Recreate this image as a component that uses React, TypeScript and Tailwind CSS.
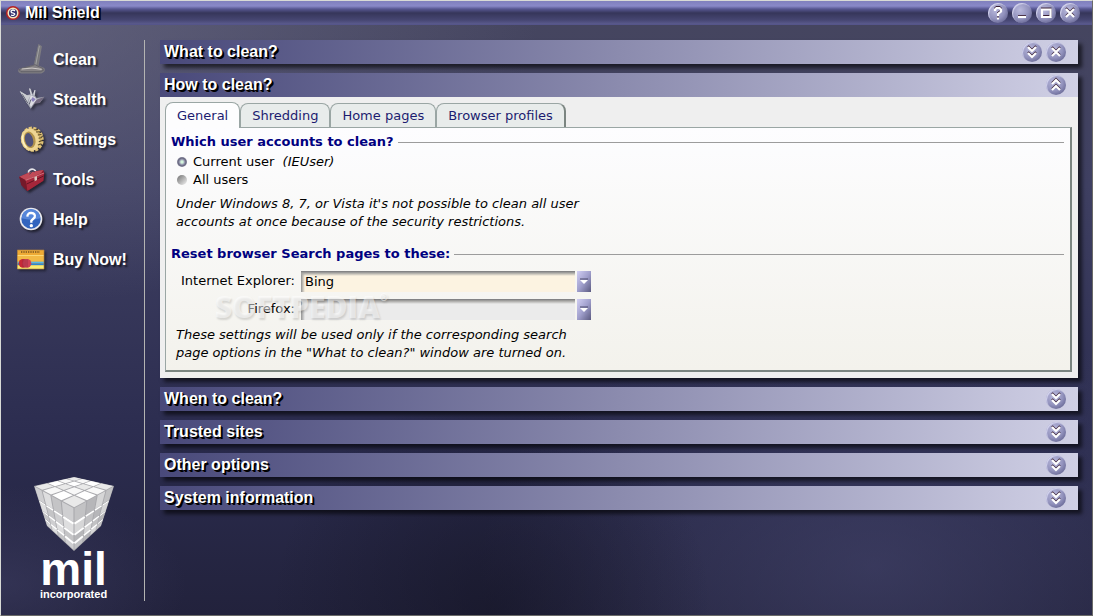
import React, { useState } from "react";

type Glyph = "help" | "minimize" | "maximize" | "close" | "down" | "up";

const GLYPHS: Record<Glyph, React.ReactNode> = {
  help: <path d="M7 8V6.5L8.5 5h3L13 6.5V8.5L10 11v2M10 14.5v2" />,
  minimize: <path d="M6 14h8" />,
  maximize: <path d="M6 6.5h8.5v7.5H6z" />,
  close: <path d="M6 6l8 8M14 6l-8 8" />,
  down: <path d="M6 5l4 4 4-4M6 11l4 4 4-4" />,
  up: <path d="M6 9l4-4 4 4M6 15l4-4 4 4" />,
};

const RoundButton = ({ glyph, label }: { glyph: Glyph; label: string }) => {
  return (
    <button
      aria-label={label}
      className="size-5 shrink-0 rounded-full bg-[radial-gradient(circle_at_40%_35%,#b9b9dc_0%,#9292bd_50%,#62628f_85%,#4b4b72_100%)] shadow-[inset_1px_1px_1px_#d5d5ee]"
    >
      <svg viewBox="0 0 20 20" className="size-5" fill="none">
        <g stroke="#3a2036" strokeWidth="2" transform="translate(0 -1)">
          {GLYPHS[glyph]}
        </g>
        <g stroke="#fff" strokeWidth="2.2">
          {GLYPHS[glyph]}
        </g>
      </svg>
    </button>
  );
};

const CleanIcon = () => (
  <svg viewBox="0 0 84 96" className="h-8 w-7 shrink-0">
    <path d="M66 4L53 64Q32 70 8 76Q2 84 14 86H72Q84 82 80 74L62 66L72 8Z" fill="#c9c38a" opacity=".28" stroke="#d8d29a" strokeWidth="5" />
    <path d="M63 6L51 60L56 68L62 62L70 8Z" fill="#77777b" />
    <path d="M67 6L56 64" stroke="#b9b9ba" strokeWidth="2" />
    <path d="M46 65Q54 58 62 66L77 73L79 79L70 83H12L6 77L14 73Z" fill="#858285" stroke="#56545d" strokeWidth="2" />
    <path d="M14 75Q46 69 74 76" stroke="#d0cbc8" strokeWidth="3" fill="none" />
  </svg>
);

const StealthIcon = () => (
  <svg viewBox="0 0 84 96" className="h-8 w-7 shrink-0 drop-shadow-[2px_2px_1px_#0006]">
    <path d="M8 21L30 34L40 31L36 13L41 14L47 31L53 18L56 18L53 34L59 42L82 38L68 57L54 58L41 74L31 59Z" fill="#a5a8b3" />
    <path d="M8 21L30 34L41 34L33 48L31 59Z" fill="#c9cbd0" />
    <path d="M41 34L53 39L59 47L42 70L35 55Z" fill="#dcdce2" />
    <path d="M42 70L59 47L82 38L68 57L54 58Z" fill="#73697f" />
    <path d="M47 39L56 46L48 54L42 47Z" fill="#8c83bc" />
    <path d="M16 31L32 57M41 47L37 61" stroke="#5e6071" strokeWidth="3" />
    <path d="M38 14L44 34M53 19L51 34" stroke="#d7d8de" strokeWidth="3" />
  </svg>
);

const SettingsIcon = () => (
  <svg viewBox="0 0 84 96" className="h-8 w-7 shrink-0 drop-shadow-[2px_2px_1px_#0008]">
    <g transform="rotate(-14 44 46)">
      <ellipse cx="46" cy="46" rx="29" ry="33" fill="#c6a45a" stroke="#e0c377" strokeWidth="10" strokeDasharray="9 4" />
      <ellipse cx="40" cy="46" rx="28" ry="34" fill="#eed592" />
      <ellipse cx="38" cy="46" rx="17" ry="25" fill="#b2934c" />
      <ellipse cx="36" cy="46" rx="12" ry="21" fill="#505177" />
      <path d="M22 26Q12 46 23 66" fill="none" stroke="#fff3c4" strokeWidth="4" />
      <path d="M57 20l13 2M62 28l12 2M65 38l11 1M65 48h11M63 58l11-1M58 67l11-1" stroke="#594a27" strokeWidth="3" />
    </g>
  </svg>
);

const ToolsIcon = () => (
  <svg viewBox="0 0 84 96" className="h-8 w-7 shrink-0 drop-shadow-[2px_2px_1px_#0008]">
    <path d="M35 29V21Q45 10 55 20V30" fill="none" stroke="#e5e5e9" strokeWidth="5" />
    <path d="M7 38L38 25L79 18L82 28L79 50L31 81L13 63Z" fill="#8f182a" />
    <path d="M7 38L38 25L79 18L72 28L26 49Z" fill="#c04a57" />
    <path d="M26 49L81 27L79 50L31 81Z" fill="#a5263a" />
    <path d="M7 38L26 49L31 81L13 63Z" fill="#74192a" />
    <path d="M26 49L81 27" stroke="#e5a0a4" strokeWidth="2" />
    <path d="M29 60L80 36" stroke="#611424" strokeWidth="3" />
    <path d="M52 40l8-4v12l-7 4z" fill="#d9c5bd" />
    <path d="M38 31q8-14 16-7" fill="none" stroke="#454458" strokeWidth="3" />
  </svg>
);

const HelpIcon = () => (
  <svg viewBox="0 0 84 96" className="h-8 w-7 shrink-0 drop-shadow-[2px_2px_1px_#0008]">
    <circle cx="42" cy="45" r="34" fill="#e8e8ed" />
    <circle cx="42" cy="45" r="29" fill="#3264be" />
    <path d="M14 43a28 28 0 0 1 56 0Q43 51 14 43Z" fill="#5686da" />
    <path d="M31 38Q32 26 43 27Q56 28 53 40L43 50V56" fill="none" stroke="#fff" strokeWidth="7" />
    <circle cx="43" cy="65" r="5" fill="#fff" />
  </svg>
);

const BuyIcon = () => (
  <svg viewBox="0 0 84 96" className="h-8 w-7 shrink-0 drop-shadow-[2px_2px_1px_#0006]">
    <path d="M1 18h80v57H1z" fill="#eeaa35" />
    <path d="M1 36h80v17H1z" fill="#f2b945" />
    <path d="M1 33h80v3H1z" fill="#fbd978" />
    <path d="M1 53h80v5H1z" fill="#58b8e6" />
    <path d="M1 58h80v6H1z" fill="#2f86d0" />
    <path d="M1 64h80v11H1z" fill="#f8ec72" />
    <path d="M12 24h57" stroke="#765320" strokeWidth="5" strokeDasharray="4 3" />
    <circle cx="18" cy="58" r="13" fill="#c72837" />
    <circle cx="30" cy="58" r="13" fill="#cf4055" />
    <path d="M18 46v24M24 45v26M30 46v24" stroke="#8c2a3f" strokeWidth="2" />
    <path d="M1 18h80v57H1z" fill="none" stroke="#b08040" strokeWidth="2" />
  </svg>
);

const NAV = [
  { label: "Clean", Icon: CleanIcon },
  { label: "Stealth", Icon: StealthIcon },
  { label: "Settings", Icon: SettingsIcon },
  { label: "Tools", Icon: ToolsIcon },
  { label: "Help", Icon: HelpIcon },
  { label: "Buy Now!", Icon: BuyIcon },
];

type Point = [number, number];

const CUTS = [0, 0.2, 0.42, 0.68, 1];
const LEVELS = [0, 0.36, 0.62, 0.82, 1];

// bilinear point inside the quad a-b-c-d
const at = ([a, b, c, d]: Point[], u: number, v: number): Point => [
  (1 - v) * ((1 - u) * a[0] + u * b[0]) + v * ((1 - u) * d[0] + u * c[0]),
  (1 - v) * ((1 - u) * a[1] + u * b[1]) + v * ((1 - u) * d[1] + u * c[1]),
];

const Face = ({ quad, rows, fills, lip }: { quad: Point[]; rows: number[]; fills: string[]; lip?: boolean }) => (
  <g>
    {[0, 1, 2, 3].flatMap((i) =>
      [0, 1, 2, 3].map((j) => {
        const u0 = CUTS[i] + 0.015;
        const u1 = CUTS[i + 1] - 0.015;
        const v0 = rows[j] + 0.01;
        const v1 = rows[j + 1] - 0.02;
        const corners = [at(quad, u0, v0), at(quad, u1, v0), at(quad, u1, v1), at(quad, u0, v1)];
        return (
          <g key={`${i}-${j}`}>
            <polygon points={corners.join(" ")} fill={fills[(i + j) % fills.length]} />
            {lip && j > 0 && <polyline points={corners.slice(0, 2).join(" ")} stroke="#fff" strokeWidth={1 + i / 3} />}
          </g>
        );
      })
    )}
  </g>
);

const CubeLogo = () => (
  <svg viewBox="0 0 80 74" className="h-[74px] w-20">
    <path d="M40 0L80 9L67 49L40 74L13 49L0 9Z" fill="#a9a9ad" />
    <Face quad={[[40, 0], [80, 9], [40, 31], [0, 9]]} rows={CUTS} fills={["#e9e9e9", "#f8f8f8", "#fff"]} />
    <Face lip quad={[[0, 9], [40, 31], [40, 74], [13, 49]]} rows={LEVELS} fills={["#cfcfd1", "#dededf", "#c4c4c6"]} />
    <Face lip quad={[[80, 9], [40, 31], [40, 74], [67, 49]]} rows={LEVELS} fills={["#c2c2c4", "#d6d6d7", "#b6b6b9"]} />
  </svg>
);

const Sidebar = () => (
  <aside className="flex w-36 shrink-0 flex-col border-r border-[#b4b4b2] pl-4">
    <nav>
      {NAV.map(({ label, Icon }) => (
        <a
          key={label}
          href="#"
          className="flex h-10 items-center gap-2 text-base font-bold text-white [text-shadow:2px_2px_2px_#000a]"
        >
          <Icon />
          {label}
        </a>
      ))}
    </nav>
    <div className="mt-auto flex flex-col items-center pr-3.5 font-bold text-white">
      <CubeLogo />
      <span className="h-9 text-[46px] leading-9">mil</span>
      <span className="text-[11px] leading-3.5">incorporated</span>
    </div>
  </aside>
);

const Bar = ({ title, open, closable }: { title: string; open?: boolean; closable?: boolean }) => (
  <header className="flex h-6 items-center gap-1 bg-linear-to-r from-[#49497a] via-[#8b8bae] to-[#d0d0e5] pr-3 pl-1">
    <h2 className="mr-auto text-base leading-6 font-bold text-white [text-shadow:1px_1px_0_#000,2px_2px_0_#000]">{title}</h2>
    <RoundButton glyph={open ? "up" : "down"} label={open ? `Collapse ${title}` : `Expand ${title}`} />
    {closable && <RoundButton glyph="close" label={`Close ${title}`} />}
  </header>
);

const Section = ({ children }: { children: React.ReactNode }) => (
  <section className="shadow-[4px_4px_4px_#0009]">{children}</section>
);

const GroupTitle = ({ children }: { children: React.ReactNode }) => (
  <h3 className="flex items-center gap-1 leading-[18px] font-bold text-[#000080]">
    {children}
    <span className="h-px flex-1 bg-[#9c9c9c]" />
  </h3>
);

const Radio = ({ id, checked, children }: { id: string; checked?: boolean; children: React.ReactNode }) => (
  <div className="flex h-[18px] items-center gap-1.5 pl-1.5">
    <input
      id={id}
      type="radio"
      name="accounts"
      defaultChecked={checked}
      className="size-2.5 appearance-none rounded-full bg-[linear-gradient(135deg,#707070,#f4f4f4)] checked:bg-[radial-gradient(circle,#d4f4dc_0_15%,#8d8da8_40%,#68687f_55%,#c8c8dc_100%)]"
    />
    <label htmlFor={id}>{children}</label>
  </div>
);

const Picker = ({ id, label, options, muted }: { id: string; label: string; options: string[]; muted?: boolean }) => (
  <>
    <label htmlFor={id} className="text-right leading-5">
      {label}
    </label>
    <div className="relative h-[21px]">
      <select
        id={id}
        className={`h-full w-full appearance-none border-r-[16px] border-transparent bg-clip-padding pl-1 outline-none ${
          muted ? "bg-[#ebebeb]" : "bg-[#fcf3e1]"
        } bg-[linear-gradient(#77777a,#a8a7a4_2px,transparent_5px),linear-gradient(90deg,#929292,transparent_4px)]`}
      >
        {options.map((option) => (
          <option key={option}>{option}</option>
        ))}
      </select>
      <svg viewBox="0 0 14 21" className="pointer-events-none absolute top-0 right-0 h-full w-3.5">
        <defs>
          <linearGradient id={`${id}-arrow`} x1="0" y1="0" x2="1" y2="1">
            <stop offset="0" stopColor="#d2cff4" />
            <stop offset=".5" stopColor="#a09fcc" />
            <stop offset="1" stopColor="#5b5a80" />
          </linearGradient>
        </defs>
        <path d="M0 0h14v21H0z" fill={`url(#${id}-arrow)`} />
        <path d="M3 8h8" stroke="#4a486b" />
        <path d="M3 9h8l-4 4z" fill="#fff" />
      </svg>
    </div>
  </>
);

const TABS = ["General", "Shredding", "Home pages", "Browser profiles"];

const Tabs = () => {
  const [active, setActive] = useState("General");

  return (
    <div role="tablist" className="flex h-[26px] items-end">
      {TABS.map((tab) => (
        <button
          key={tab}
          role="tab"
          aria-selected={tab === active}
          onClick={() => setActive(tab)}
          className={
            tab === active
              ? "relative z-10 -mb-px h-[26px] rounded-t-lg border border-b-0 border-[#9aa6a4] bg-[#fdfdfe] px-[11px] text-[#1c1c70]"
              : "h-6 rounded-t-lg border border-b-0 border-[#9aa6a4] bg-[#e8eceb] px-[11px] text-[#1c1c70] last:border-r-2 last:border-r-[#7b8581]"
          }
        >
          {tab}
        </button>
      ))}
    </div>
  );
};

const HowToClean = () => (
  <div className="bg-[#efefef] px-[5px] pt-1 pr-1.5 pb-1.5 font-['DejaVu_Sans',sans-serif] text-[13px] text-black">
    <Tabs />
    <div className="border border-r-2 border-b-2 border-[#9aa6a4] border-r-[#7b8581] border-b-[#7b8581] bg-linear-to-b from-[#fdfdff] to-[#f3f2ec] pt-[5px] pr-1.5 pb-2 pl-[5px]">
      <GroupTitle>Which user accounts to clean?</GroupTitle>
      <div className="pt-0.5">
        <Radio id="current-user" checked>
          Current user&nbsp; <i>(IEUser)</i>
        </Radio>
        <Radio id="all-users">All users</Radio>
      </div>
      <p className="pt-1.5 pb-3.5 pl-[5px] leading-[18px] italic">
        Under Windows 8, 7, or Vista it's not possible to clean all user
        <br />
        accounts at once because of the security restrictions.
      </p>
      <GroupTitle>Reset browser Search pages to these:</GroupTitle>
      <div className="relative pt-2 pl-[5px]">
        <div className="grid grid-cols-[119px_290px] gap-x-1.5 gap-y-[7px]">
          <Picker id="ie" label="Internet Explorer:" options={["Bing", "Google"]} />
          <Picker id="firefox" label="Firefox:" options={["", "Google"]} muted />
        </div>
        <span className="pointer-events-none absolute top-6 left-11 flex font-['Open_Sans',sans-serif] text-[30px] leading-10 font-extrabold text-white/50 [text-shadow:1px_2px_2px_#0002]">
          SOFTPEDIA
          <span className="text-[10px] leading-5">®</span>
        </span>
      </div>
      <p className="pt-1.5 pl-[5px] leading-[18px] italic">
        These settings will be used only if the corresponding search
        <br />
        page options in the "What to clean?" window are turned on.
      </p>
    </div>
  </div>
);

const TitleBar = () => (
  <header className="flex h-6 items-center gap-1 border-b border-[#55558a] bg-[linear-gradient(#8080bd,#8989c8_5px,#565690_8px,#36365a_12px,#464672_19px,#5a5a8c)] pr-3 pl-1">
    <svg viewBox="0 0 16 16" className="size-4">
      <circle cx="8" cy="8" r="7" fill="#b72222" />
      <circle cx="8" cy="8" r="5.5" fill="#f3e9c0" />
      <circle cx="8" cy="8" r="4" fill="#30306c" />
      <path d="M10 6Q8 4 6 6Q6 8 8 8Q11 9 9 10Q8 11 6 10" fill="none" stroke="#fff" strokeWidth="1.2" />
    </svg>
    <h1 className="mr-auto text-base leading-6 font-bold text-white [text-shadow:1px_1px_0_#000,2px_2px_0_#000]">Mil Shield</h1>
    <RoundButton glyph="help" label="Help" />
    <RoundButton glyph="minimize" label="Minimize" />
    <RoundButton glyph="maximize" label="Maximize" />
    <RoundButton glyph="close" label="Close" />
  </header>
);

export default function App() {
  return (
    <div className="flex min-h-screen flex-col border border-t-[#d8dad6] border-r-[#6a6a68] border-b-[#6a6a68] border-l-[#d8dad6] bg-[radial-gradient(ellipse_at_0%_0%,#74749099_0%,transparent_35%),radial-gradient(ellipse_at_0%_95%,#40406688_0%,transparent_12%),radial-gradient(ellipse_at_45%_100%,#14142499_0%,transparent_26%),radial-gradient(ellipse_at_80%_92%,#4a4b7488_0%,transparent_32%),linear-gradient(#46465f_0%,#3f4062_30%,#2c2d50_70%,#22223c_100%)] font-['Liberation_Sans',Arial,sans-serif]">
      <TitleBar />
      <div className="flex flex-1 pt-[15px] pr-3.5 pb-3.5">
        <Sidebar />
        <main className="ml-[15px] flex min-w-0 flex-1 flex-col gap-[9px]">
          <Section>
            <Bar title="What to clean?" closable />
          </Section>
          <Section>
            <Bar title="How to clean?" open />
            <HowToClean />
          </Section>
          <Section>
            <Bar title="When to clean?" />
          </Section>
          <Section>
            <Bar title="Trusted sites" />
          </Section>
          <Section>
            <Bar title="Other options" />
          </Section>
          <Section>
            <Bar title="System information" />
          </Section>
        </main>
      </div>
    </div>
  );
}
